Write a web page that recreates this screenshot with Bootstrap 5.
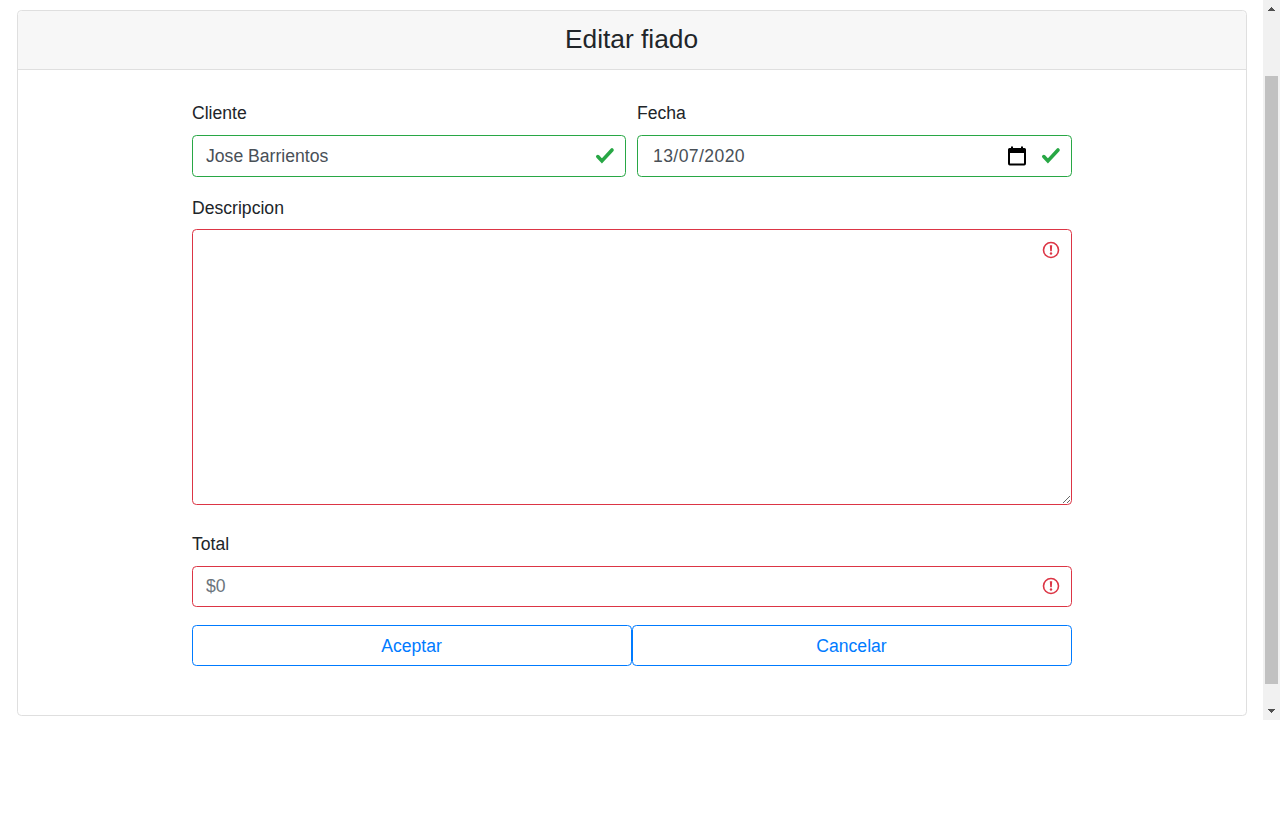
<!DOCTYPE html>
<html lang="es">
<head>
<meta charset="utf-8">
<meta name="viewport" content="width=device-width, initial-scale=1">
<title>Editar fiado</title>
<link href="https://cdn.jsdelivr.net/npm/bootstrap@5.3.0/dist/css/bootstrap.min.css" rel="stylesheet">
<style>
  body { font-family: "Liberation Sans", Arial, sans-serif; font-size: 17.6px; line-height: 26px; color: #212529; background: #fff; overflow: hidden; }
  .viewport { height: 720px; }
  .page { padding: 10px 16px 4px 17px; }
  .fiado-card { height: 706px; border: 1px solid #dfdfdf; border-radius: 4.4px; }
  .fiado-card > .card-header { height: 59px; padding: 0; background: #f7f7f7; border-bottom: 1px solid #dfdfdf; }
  .title { font-size: 26.3px; line-height: 32px; padding: 12px 1px 0 0; font-weight: 400; }
  .fiado-form { width: 880px; padding-top: 30px; }
  .form-label { height: 27px; margin: 0; display: block; }
  .form-label.tight { height: 26px; }
  .fields { gap: 11px; }
  .client { width: 434px; }
  .form-control { height: 41px; font-size: 17.6px; line-height: 26px; color: #495057; border-radius: 4.4px; background-image: none !important; }
  .form-control.is-valid { border-color: #28a745; height: 42px; padding: 0 13px !important; }
  .form-control.is-invalid { border-color: #dc3545; padding: 0 13px !important; }
  .form-control::placeholder { color: #6c757d; }
  .form-control.date-field { padding-left: 15px !important; letter-spacing: .4px; }
  textarea.form-control.is-invalid { height: 276px; }
  .state { position: absolute; width: 20px; height: 20px; right: 11px; top: 10px; pointer-events: none; }
  .state.low { top: 11px; }
  .calendar { position: absolute; width: 20px; height: 20px; right: 45px; top: 11px; }
  .actions { margin-top: 18px; }
  .actions .btn { flex: 1 1 0; height: 41px; padding: 0 1px 0 0; font-size: 17.6px; line-height: 26px; border-radius: 4.4px; --bs-btn-color: #007bff; --bs-btn-border-color: #007bff; }
  .scroll-track { width: 17px; background: #f1f1f1; }
  .thumb { width: 13px; height: 608px; margin-top: 40px; background: #c1c1c1; }
  .scroll-track svg { display: block; width: 17px; }
</style>
</head>
<body>
<div class="viewport d-flex">
  <main class="page flex-grow-1">
    <div class="card fiado-card">
      <div class="card-header text-center"><h4 class="title m-0">Editar fiado</h4></div>
      <form class="fiado-form mx-auto" novalidate>
        <div class="fields d-flex">
          <div class="client">
            <label class="form-label" for="cliente">Cliente</label>
            <div class="position-relative mt-2">
              <input id="cliente" class="form-control is-valid" value="Jose Barrientos">
              <svg class="state" viewBox="0 0 20 20"><path d="M2.8 11.6l4.1 4.3L17 5" fill="none" stroke="#28a745" stroke-width="3.6" stroke-linecap="round"/></svg>
            </div>
          </div>
          <div class="flex-grow-1">
            <label class="form-label" for="fecha">Fecha</label>
            <div class="position-relative mt-2">
              <input id="fecha" class="form-control is-valid date-field" value="13/07/2020">
              <svg class="calendar" viewBox="0 0 20 20"><path fill-rule="evenodd" d="M4 .5h2V2h8V.5h2V2h1.5Q19 2 19 3.5v14q0 2-1.8 2H2.8q-1.8 0-1.8-2v-14Q1 2 2.5 2H4zM3 7v10.5h14V7z"/></svg>
              <svg class="state" viewBox="0 0 20 20"><path d="M2.8 11.6l4.1 4.3L17 5" fill="none" stroke="#28a745" stroke-width="3.6" stroke-linecap="round"/></svg>
            </div>
          </div>
        </div>
        <div style="margin-top:18px">
          <label class="form-label tight" for="descripcion">Descripcion</label>
          <div class="position-relative mt-2">
            <textarea id="descripcion" class="form-control is-invalid"></textarea>
            <svg class="state low" viewBox="0 0 20 20"><circle cx="10" cy="10" r="7.5" fill="none" stroke="#dc3545" stroke-width="1.6"/><path d="M8.8 5.3h2.4l-.4 6H9.2z" fill="#dc3545"/><circle cx="10" cy="13.5" r="1.2" fill="#dc3545"/></svg>
          </div>
        </div>
        <div style="margin-top:26px">
          <label class="form-label" for="total">Total</label>
          <div class="position-relative mt-2">
            <input id="total" class="form-control is-invalid" placeholder="$0">
            <svg class="state" viewBox="0 0 20 20"><circle cx="10" cy="10" r="7.5" fill="none" stroke="#dc3545" stroke-width="1.6"/><path d="M8.8 5.3h2.4l-.4 6H9.2z" fill="#dc3545"/><circle cx="10" cy="13.5" r="1.2" fill="#dc3545"/></svg>
          </div>
        </div>
        <div class="actions d-flex">
          <button type="button" class="btn btn-outline-primary">Aceptar</button>
          <button type="button" class="btn btn-outline-primary">Cancelar</button>
        </div>
      </form>
    </div>
  </main>
  <div class="scroll-track d-flex flex-column align-items-center justify-content-between" aria-hidden="true">
    <svg height="17" viewBox="0 0 17 17" shape-rendering="crispEdges"><path d="M5 11V10h1V9h1V8h1V7h1v1h1v1h1v1h1v1z" fill="#505050"/></svg>
    <div class="thumb"></div>
    <svg height="17" viewBox="0 0 17 17" shape-rendering="crispEdges"><path d="M5 6v1h1v1h1v1h1v1h1V9h1V8h1V7h1V6z" fill="#505050"/></svg>
  </div>
</div>
<script src="https://cdn.jsdelivr.net/npm/bootstrap@5.3.0/dist/js/bootstrap.bundle.min.js"></script>
</body>
</html>
